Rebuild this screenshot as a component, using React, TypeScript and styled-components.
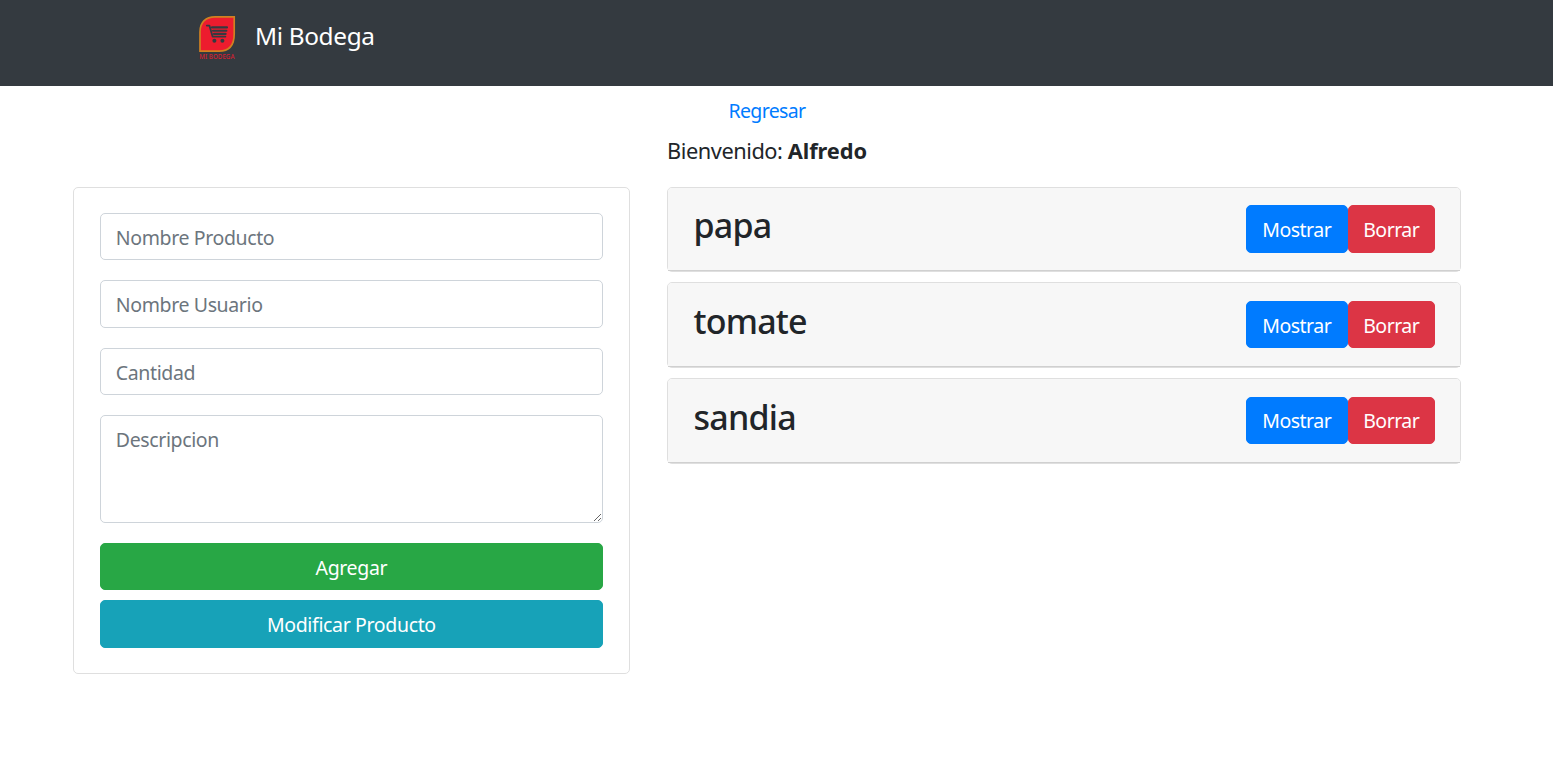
import React from "react";
import styled, { createGlobalStyle } from "styled-components";

const GlobalStyle = createGlobalStyle`
  *, *::before, *::after { box-sizing: border-box; }
  body {
    margin: 0;
    background: #fff;
    color: #212529;
    font: 400 19.5px/30px "Noto Sans", "Open Sans", sans-serif;
  }
`;

const Navbar = styled.nav`
  height: 86px;
  padding: 14px 0 0 197px;
  display: flex;
  align-items: flex-start;
  gap: 18px;
  background: #343a40;
`;

const LogoSvg = styled.svg`
  display: block;
  width: 40px;
  height: 48px;
`;

const Brand = styled.a`
  margin-top: 3px;
  color: #fff;
  font-size: 24.4px;
  line-height: 37px;
  letter-spacing: -0.35px;
`;

const Page = styled.main`
  width: 1425px;
  margin-left: 54.5px;
  padding: 10px 18.75px 0;
`;

const BackRow = styled.div`
  display: flex;
  justify-content: center;
`;

const BackLink = styled.a`
  color: #007bff;
  letter-spacing: -0.65px;
`;

const Columns = styled.div`
  display: grid;
  grid-template-columns: 556.25px 793.75px;
  column-gap: 37.5px;
  align-items: start;
`;

const Welcome = styled.p`
  grid-column: 2;
  margin: 10px 0 20.75px;
  font-size: 21.8px;
  letter-spacing: -0.45px;

  strong { letter-spacing: -0.05px; }
`;

const FormCard = styled.form`
  grid-column: 1;
  display: flex;
  flex-direction: column;
  padding: 25px 25.6px;
  border: 1px solid #dfdfdf;
  border-radius: 5px;
`;

const Field = styled.input`
  width: 100%;
  height: 47.5px;
  margin: 0 0 20px;
  padding: 8px 15px 7px;
  border: 1px solid #ced4da;
  border-radius: 5px;
  color: #495057;
  background: #fff;
  font: inherit;
  letter-spacing: -0.38px;
  outline: none;
  &::placeholder { color: #6c757d; opacity: 1; }
`;

const TextArea = styled(Field).attrs({ as: "textarea" })`
  display: block;
  height: 107.5px;
  padding-top: 8.5px;
  resize: vertical;
`;

const Button = styled.button<{ $color: string }>`
  height: 47.5px;
  padding: 8.5px 14px 6.5px;
  border: 1px solid ${(p) => p.$color};
  border-radius: 5px;
  background: ${(p) => p.$color};
  color: #fff;
  font: inherit;
  letter-spacing: -0.35px;
`;

const FormActions = styled.div`
  display: grid;
  row-gap: 10px;
`;

const ProductList = styled.div`
  display: flex;
  flex-direction: column;
  gap: 10px;
`;

const ProductCard = styled.article`
  border: 1px solid #dfdfdf;
  border-radius: 5px;
`;

const ProductHeader = styled.header`
  display: flex;
  justify-content: space-between;
  height: 83.6px;
  padding: 17.6px 25px 0 25.6px;
  border-bottom: 1px solid #d0d0d0;
  border-radius: 4px 4px 0 0;
  background: #f7f7f7;
`;

const ProductName = styled.h3`
  margin: -1px 0 0;
  font-size: 34px;
  line-height: 42px;
  font-weight: 500;
  letter-spacing: -0.8px;
`;

const Actions = styled.div`
  display: grid;
  grid-template-columns: 102px 87px;
  align-items: start;

  button { letter-spacing: -0.5px; }
`;

function Logo() {
  return (
    <LogoSvg viewBox="0 0 40 48" aria-label="Mi Bodega">
      <path d="M3 37.2V18C3 8 9 2.8 18 2.8H37.2V20C37.2 32 31 37.2 22 37.2Z" fill="#ed1c2e" stroke="#cf8121" strokeWidth="1.7" />
      <g stroke="#343a40" fill="none" strokeLinecap="round" strokeLinejoin="round">
        <path d="M9.8 11.6H12.4L15.6 22.6H28.4" strokeWidth="1.8" />
        <path d="M15 13.4H30M16 16.8H29.4M17 19.9H28.6" strokeWidth="2.1" />
      </g>
      <circle cx="17.4" cy="26.8" r="2" fill="#343a40" />
      <circle cx="25.4" cy="26.8" r="2" fill="#343a40" />
      <text x="2.3" y="44.8" textLength="35.2" lengthAdjust="spacingAndGlyphs" fontFamily="Noto Sans, sans-serif" fontSize="6.8" fontWeight="500" fill="#d22032">MI BODEGA</text>
    </LogoSvg>
  );
}

const products = ["papa", "tomate", "sandia"];

export default function App() {
  return (
    <>
      <GlobalStyle />
      <Navbar>
        <Logo />
        <Brand>Mi Bodega</Brand>
      </Navbar>
      <Page>
        <BackRow>
          <BackLink>Regresar</BackLink>
        </BackRow>
        <Columns>
          <Welcome>
            Bienvenido: <strong>Alfredo</strong>
          </Welcome>
          <FormCard>
            <Field placeholder="Nombre Producto" />
            <Field placeholder="Nombre Usuario" />
            <Field placeholder="Cantidad" />
            <TextArea placeholder="Descripcion" />
            <FormActions>
              <Button type="button" $color="#28a745">Agregar</Button>
              <Button type="button" $color="#17a2b8">Modificar Producto</Button>
            </FormActions>
          </FormCard>
          <ProductList>
            {products.map((name) => (
              <ProductCard key={name}>
                <ProductHeader>
                  <ProductName>{name}</ProductName>
                  <Actions>
                    <Button $color="#007bff">Mostrar</Button>
                    <Button $color="#dc3545">Borrar</Button>
                  </Actions>
                </ProductHeader>
              </ProductCard>
            ))}
          </ProductList>
        </Columns>
      </Page>
    </>
  );
}
